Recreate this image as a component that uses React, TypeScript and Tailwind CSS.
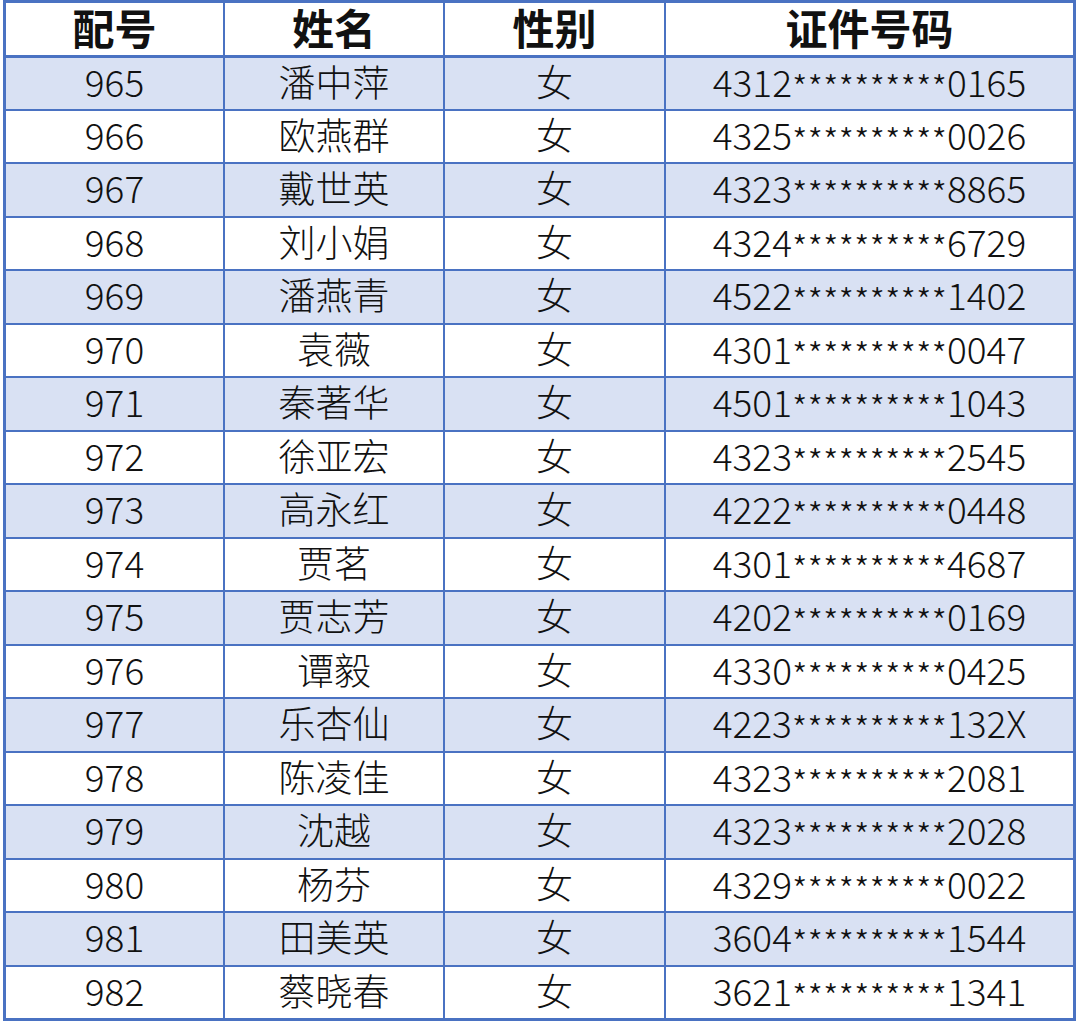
const rows: [string, string, string][] = [
  ['965', '潘中萍', '4312**********0165'],
  ['966', '欧燕群', '4325**********0026'],
  ['967', '戴世英', '4323**********8865'],
  ['968', '刘小娟', '4324**********6729'],
  ['969', '潘燕青', '4522**********1402'],
  ['970', '袁薇', '4301**********0047'],
  ['971', '秦著华', '4501**********1043'],
  ['972', '徐亚宏', '4323**********2545'],
  ['973', '高永红', '4222**********0448'],
  ['974', '贾茗', '4301**********4687'],
  ['975', '贾志芳', '4202**********0169'],
  ['976', '谭毅', '4330**********0425'],
  ['977', '乐杏仙', '4223**********132X'],
  ['978', '陈凌佳', '4323**********2081'],
  ['979', '沈越', '4323**********2028'],
  ['980', '杨芬', '4329**********0022'],
  ['981', '田美英', '3604**********1544'],
  ['982', '蔡晓春', '3621**********1341'],
];

const cols = 'grid grid-cols-[217px_220px_221px_1fr]';
const cell = 'flex items-center justify-center pb-1';
const line = 'border-l-2 border-[#4a72c2]';

function IdNumber({ id }: { id: string }) {
  const head = id.slice(0, 4);
  const tail = id.slice(14);
  return (
    <span className="whitespace-nowrap">
      {head}
      <span className="relative top-[5px] text-[35px]">**********</span>
      {tail}
    </span>
  );
}

export default function App() {
  return (
    <div
      className="w-[1080px] h-[1027px] bg-white pl-[3px] text-[#111]"
      style={{ fontFamily: '"Noto Sans CJK SC", "Noto Sans", sans-serif' }}
    >
      <div className="w-[1073px] border-[3px] border-[#4a72c2]">
        <div className={`${cols} h-[52px] text-[42px] font-bold leading-[1.1]`}>
          <div className={cell}>配号</div>
          <div className={`${cell} ${line}`}>姓名</div>
          <div className={`${cell} ${line}`}>性别</div>
          <div className={`${cell} ${line}`}>证件号码</div>
        </div>
        {rows.map(([no, name, id], i) => (
          <div
            key={no}
            className={`${cols} h-[53.5px] text-[37px] font-light leading-[1.1] border-t-2 border-[#4a72c2] ${
              i % 2 === 0 ? 'bg-[#d9e1f3]' : 'bg-white'
            } ${i === 0 ? 'border-t-[3px]' : ''}`}
          >
            <div className={cell}>{no}</div>
            <div className={`${cell} ${line}`}>{name}</div>
            <div className={`${cell} ${line}`}>女</div>
            <div className={`${cell} ${line}`}>
              <IdNumber id={id} />
            </div>
          </div>
        ))}
      </div>
    </div>
  );
}
